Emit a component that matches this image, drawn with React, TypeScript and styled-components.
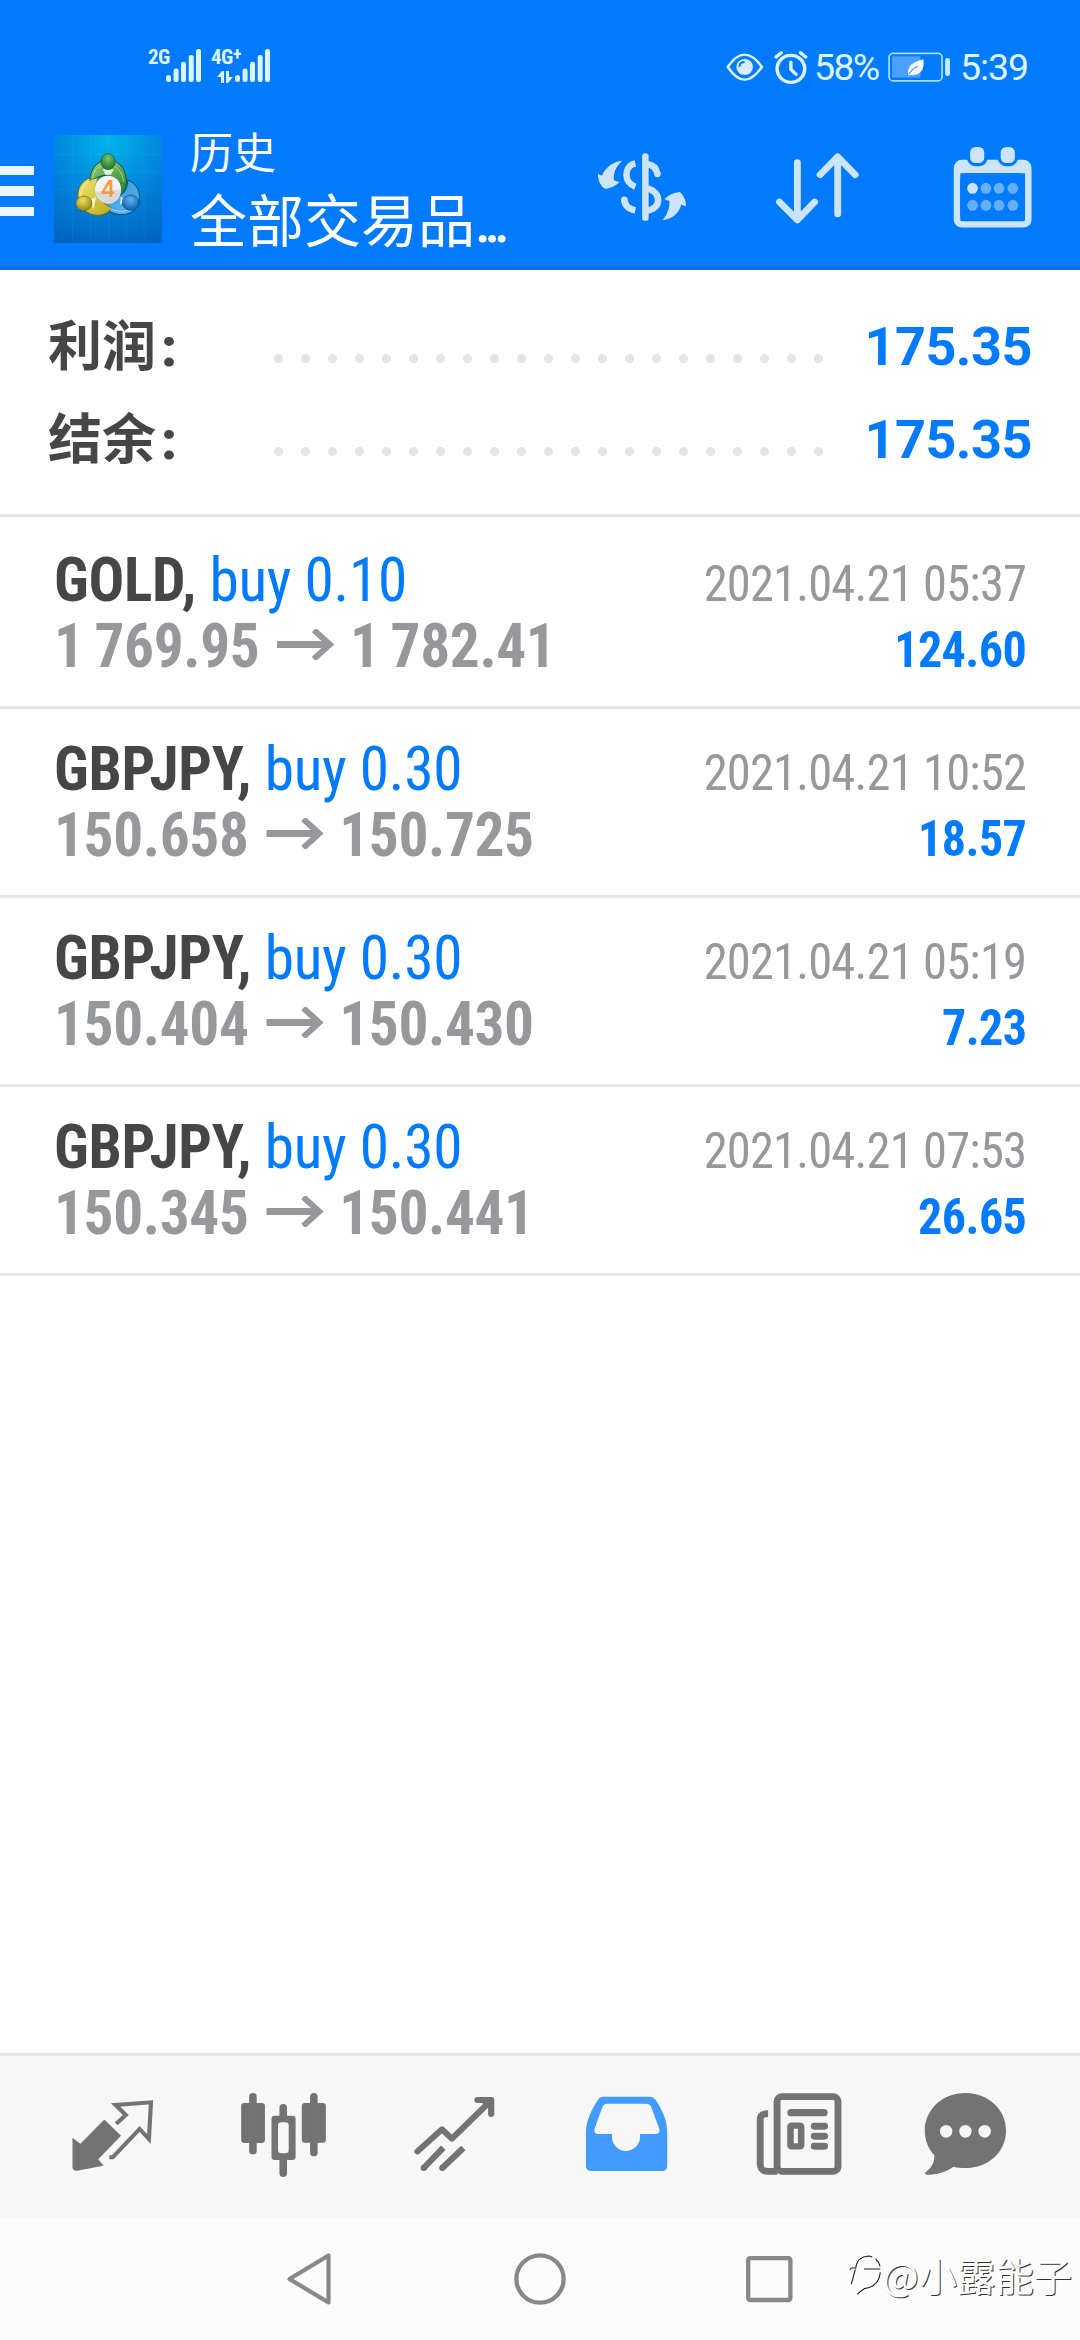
import React from 'react';
import styled, { createGlobalStyle } from 'styled-components';

const GlobalStyle = createGlobalStyle`
  * { box-sizing: border-box; }
  html, body { margin: 0; padding: 0; background: #fff; }
  body { font-family: Roboto, "Noto Sans CJK SC", sans-serif; }
  svg { display: block; flex: none; }
`;

const BLUE = '#007aff';
const GREY = '#737373';

const Screen = styled.div`
  width: 1080px;
  height: 2340px;
  display: flex;
  flex-direction: column;
  background: #fff;
  overflow: hidden;
  position: relative;
`;

const Header = styled.header`
  height: 270px;
  background: ${BLUE};
  border-bottom: 3px solid #0a6ede;
`;

const StatusBar = styled.div`
  height: 111px;
  padding: 48px 53px 0 148px;
  display: flex;
  justify-content: space-between;
  align-items: flex-start;
  color: #dcf4ff;
`;

const SignalGroup = styled.div`
  display: flex;
  gap: 10px;
`;

const Signal = styled.div`
  display: flex;
  align-items: flex-start;
  height: 35px;
`;

const NetLabel = styled.span<{ $w: number }>`
  width: ${(p) => p.$w}px;
  height: 34px;
  font: 700 21px/18px Roboto, sans-serif;
  font-stretch: 75%;
  letter-spacing: -0.5px;
  white-space: nowrap;
`;

const Sup = styled.span`
  font-size: 18px;
  position: relative;
  top: -4px;
`;

const DataArrows = styled.svg`
  margin-top: 4px;
  margin-left: 6px;
`;

const StatusRight = styled.div`
  display: flex;
  align-items: center;
  height: 38px;
`;

const AlarmSlot = styled.div`
  margin-left: 10px;
`;

const StatusText = styled.span<{ $w: number; $ml: number; $ls: number }>`
  width: ${(p) => p.$w}px;
  margin-left: ${(p) => p.$ml}px;
  font: 400 37.5px/38px Roboto, sans-serif;
  letter-spacing: ${(p) => p.$ls}px;
  white-space: nowrap;
`;

const ActionBar = styled.div`
  height: 156px;
  display: flex;
  align-items: center;
  padding-right: 42px;
`;

const Menu = styled.div`
  width: 54px;
  display: flex;
  flex-direction: column;
  gap: 11px;
  padding-top: 4px;
`;

const MenuLine = styled.i`
  width: 34px;
  height: 9.5px;
  background: #ebf7ff;
`;

const Titles = styled.div`
  flex: 1;
  height: 156px;
  padding: 9px 0 0 28px;
  color: #fff;
  display: flex;
  flex-direction: column;
`;

const Title = styled.span`
  font: 400 43px/60px "Noto Sans CJK SC", sans-serif;
  height: 57px;
`;

const Subtitle = styled.span`
  font: 400 57px/80px "Noto Sans CJK SC", sans-serif;
  height: 80px;
  white-space: nowrap;
`;

const Ellipsis = styled.span`
  font-family: Roboto, sans-serif;
  font-weight: 500;
  letter-spacing: -6.3px;
`;

const Actions = styled.div`
  display: flex;
  gap: 85.5px;
`;

const Summary = styled.section`
  height: 247px;
  padding: 30px 48px 0;
  border-bottom: 3px solid #e5e5e5;
`;

const SummaryRow = styled.div`
  height: 93px;
  display: flex;
  align-items: center;
`;

const SummaryLabel = styled.span`
  width: 226px;
  height: 93px;
  color: #464646;
  font: 700 54px/85px "Noto Sans CJK SC", sans-serif;
`;

const Colon = styled.span`
  font-family: Roboto, sans-serif;
  font-weight: 900;
  margin-left: 5px;
`;

const Dots = styled.div`
  width: 567px;
  height: 9px;
  margin-top: 23px;
  background: radial-gradient(circle at 4.5px 4.5px, #e5e5e5 4.2px, transparent 4.8px) 0 0 / 27px 9px repeat-x;
`;

const SummaryValue = styled.span`
  flex: 1;
  text-align: right;
  color: ${BLUE};
  font: 700 54px/93px Roboto, sans-serif;
  letter-spacing: -0.5px;
`;

const Deals = styled.main`
  flex: 1;
  padding-top: 3px;
`;

const Deal = styled.article`
  height: 189px;
  border-bottom: 3px solid #e5e5e5;
  padding: 27px 54px 0;
  font-stretch: 75%;
`;

const Line = styled.div`
  height: 66px;
  display: flex;
  justify-content: space-between;
  align-items: baseline;
  line-height: 66px;
  white-space: nowrap;
`;

const Symbol = styled.span`
  font-size: 61.5px;
  font-weight: 700;
  color: #464646;
  letter-spacing: -0.3px;
  transform: scaleX(0.965);
  transform-origin: left;
`;

const Side = styled.span`
  font-weight: 400;
  color: ${BLUE};
`;

const Prices = styled.span`
  font-size: 61.5px;
  font-weight: 700;
  color: #97989c;
  letter-spacing: -0.4px;
  word-spacing: -2.5px;
  transform: scaleX(0.965);
  transform-origin: left;
`;

const PriceArrow = styled.svg`
  && { display: inline-block; }
  margin: 0 16px 0 18px;
  vertical-align: 7px;
`;

const Time = styled.span`
  font-size: 50.3px;
  color: #97989c;
  letter-spacing: -0.85px;
  transform: scaleX(0.965);
  transform-origin: right;
`;

const Profit = styled.span`
  font-size: 50.3px;
  font-weight: 700;
  color: ${BLUE};
  letter-spacing: -0.6px;
  transform: scaleX(0.955);
  transform-origin: right;
`;

const TabBar = styled.nav`
  height: 165px;
  border-top: 3px solid #e4e4e4;
  background: #f7f7f7;
  padding: 36px 27px 0;
  display: flex;
`;

const Tab = styled.div`
  width: 171px;
  display: flex;
  justify-content: center;
`;

const SystemNav = styled.nav`
  height: 122px;
  background: #fcfcfc;
  padding: 35px 0 0 287px;
  display: flex;
  align-items: flex-start;
`;

const NavSlot = styled.div<{ $w: number }>`
  width: ${(p) => p.$w}px;
`;

const Watermark = styled.div`
  position: absolute;
  right: 8px;
  bottom: 35px;
  height: 60px;
  display: flex;
  align-items: center;
  color: #fff;
  font: 400 38.3px/60px "Noto Sans CJK SC", sans-serif;
  text-shadow: 1px 1px 0 #333;
`;

const CropIcon = ({ box, w = 90, h = 90, children }: { box: string; w?: number; h?: number; children: React.ReactNode }) => (
  <svg width={w} height={h} viewBox={box} preserveAspectRatio="none">{children}</svg>
);

const Bars = () => (
  <svg width="35" height="34" viewBox="0 0 35 34" fill="#dcf4ff">
    <rect x="0" y="27" width="5" height="7" rx="2.5" />
    <rect x="7.6" y="20.5" width="5" height="13.5" rx="2.2" />
    <rect x="15" y="13.7" width="5" height="20.3" rx="2.2" />
    <rect x="22.7" y="7" width="5" height="27" rx="2.2" />
    <rect x="30" y="1" width="5" height="33" rx="2.2" />
  </svg>
);

const EyeIcon = () => (
  <CropIcon box="538 64 110 90" w={38} h={30}>
    <path d="M543 109C562 80 578 72 592 72S622 80 642 109C622 138 606 147 592 147S562 138 543 109Z" fill="none" stroke="#dcf4ff" strokeWidth="7" />
    <circle cx="592" cy="109" r="24" fill="#dcecff" />
    <path d="M577 108C577 98 584 94 592 94" fill="none" stroke={BLUE} strokeWidth="6" />
  </CropIcon>
);

const AlarmIcon = () => (
  <CropIcon box="678 56 100 106" w={34.5} h={35}>
    <ellipse cx="727" cy="113" rx="40" ry="41" fill="none" stroke="#dcf4ff" strokeWidth="10" />
    <path d="M727 93V115L742 130" fill="none" stroke="#dcf4ff" strokeWidth="10" strokeLinecap="round" />
    <path d="M684 77L699 64M770 77L755 64" fill="none" stroke="#dcf4ff" strokeWidth="10" strokeLinecap="round" />
  </CropIcon>
);

const BatteryIcon = () => (
  <CropIcon box="1010 64 183 92" w={63} h={30.6}>
    <rect x="1013" y="68" width="154" height="83" rx="12" fill="none" stroke="#a6dcff" strokeWidth="5" />
    <rect x="1022" y="77" width="82" height="64" fill="#4da0ff" />
    <rect x="1176" y="82" width="14" height="54" rx="6" fill="#c7ebff" />
    <path d="M1113 86C1116 118 1106 135 1074 133L1069 134C1066 104 1080 96 1113 86Z" fill="#fff" />
    <path d="M1070 131C1078 118 1086 112 1097 106" fill="none" stroke="#4da0ff" strokeWidth="3" />
  </CropIcon>
);

const LogoIcon = () => (
  <svg width="108" height="108" viewBox="42 45 324 324">
    <defs>
      <radialGradient id="sky" cx="0.5" cy="0.05" r="1">
        <stop offset="0" stopColor="#00b4ea" />
        <stop offset="0.5" stopColor="#0086dc" />
        <stop offset="1" stopColor="#0065c0" />
      </radialGradient>
      <linearGradient id="green" x1="0" y1="0" x2="0.6" y2="1">
        <stop offset="0" stopColor="#9ccf7a" />
        <stop offset="1" stopColor="#2f8a34" />
      </linearGradient>
      <linearGradient id="yellow" x1="0" y1="0" x2="1" y2="1">
        <stop offset="0" stopColor="#f1ea74" />
        <stop offset="1" stopColor="#bba91c" />
      </linearGradient>
      <linearGradient id="azure" x1="0" y1="0" x2="0.6" y2="1">
        <stop offset="0" stopColor="#2d93d8" />
        <stop offset="1" stopColor="#57b4ea" />
      </linearGradient>
      <radialGradient id="gHead" cx="0.5" cy="0.3" r="0.7"><stop offset="0" stopColor="#7cc46a" /><stop offset="1" stopColor="#1d7427" /></radialGradient>
      <radialGradient id="yHead" cx="0.4" cy="0.3" r="0.7"><stop offset="0" stopColor="#e9de62" /><stop offset="1" stopColor="#9a8a10" /></radialGradient>
      <radialGradient id="bHead" cx="0.5" cy="0.3" r="0.7"><stop offset="0" stopColor="#5cb5ee" /><stop offset="1" stopColor="#0c5ea8" /></radialGradient>
    </defs>
    <rect x="42" y="45" width="324" height="324" fill="url(#sky)" />
    <path d="M97 45V369M152 45V369M207 45V369M260 45V369M312 45V369M42 103H366M42 156H366M42 210H366M42 264H366M42 316H366" stroke="#7fd4ff" strokeOpacity="0.13" strokeWidth="2" />
    <g strokeLinejoin="round">
      <path d="M262 180C292 190 302 216 297 246C290 274 262 288 232 283C205 277 188 262 180 244L232 230C256 222 264 202 262 180Z" fill="url(#azure)" stroke="#0b4d86" strokeWidth="3" />
      <path d="M176 168C136 170 110 196 114 232C118 266 144 286 176 286C196 284 208 276 214 264L176 238L166 200Z" fill="url(#yellow)" stroke="#6f6a10" strokeWidth="3" />
      <path d="M150 184C148 146 174 120 204 120C242 120 262 156 259 190C256 210 246 222 234 226L242 190L204 164L176 170Z" fill="url(#green)" stroke="#1c5a25" strokeWidth="3" />
      <path d="M158 174C162 146 180 134 204 134C232 136 250 160 250 186" fill="none" stroke="#c5e8ae" strokeOpacity="0.7" strokeWidth="3" />
      <path d="M122 236C120 204 140 182 168 178" fill="none" stroke="#fffcc0" strokeOpacity="0.8" strokeWidth="3" />
      <path d="M206 262C232 282 282 278 290 240" fill="none" stroke="#b7e2ff" strokeOpacity="0.8" strokeWidth="3" />
      <path d="M150 240L168 230L160 268Z" fill="#fff8d0" />
      <path d="M242 230L258 240L240 254Z" fill="#d8efff" />
      <path d="M188 148H222L212 164H196Z" fill="#e4f6da" />
      <ellipse cx="204" cy="125" rx="21" ry="24" fill="url(#gHead)" stroke="#1c5a25" strokeWidth="2" />
      <ellipse cx="132" cy="250" rx="24" ry="22" fill="url(#yHead)" stroke="#6f6a10" strokeWidth="2" />
      <ellipse cx="272" cy="248" rx="25" ry="23" fill="url(#bHead)" stroke="#0b4d86" strokeWidth="2" />
    </g>
    <circle cx="204" cy="206" r="39" fill="#f4f2f2" />
    <path d="M165 214C185 216 205 208 243 210A39 39 0 0 1 165 214Z" fill="#dcdad9" />
    <text x="204" y="230" textAnchor="middle" fontFamily="Inter, sans-serif" fontWeight="600" fontSize="68" fill="#f39a45">4</text>
  </svg>
);

const CurrencyIcon = () => (
  <CropIcon box="165.5 342 261.4 270">
    <g fill="none" stroke="#cce4ff" strokeWidth="19">
      <path d="M306 379V563" strokeLinecap="round" />
      <path d="M277 400C258 404 251 420 251 435S260 464 277 470" />
      <path d="M245 510C246 526 258 537 277 541" />
      <path d="M245 510V509" strokeLinecap="round" />
      <path d="M310 402C328 404 338 415 341 432" />
      <path d="M341 431V432" strokeLinecap="round" />
      <path d="M310 474C334 482 343 496 343 510S334 537 312 542" />
    </g>
    <path d="M236 393C222 392 190 408 180 437L168 431C168 450 175 467 190 477C204 475 220 468 231 457L215 451C212 430 219 412 238 394Z" fill="#cce4ff" />
    <path d="M356 571C372 550 377 530 376 513L361 508C372 495 388 488 406 486C418 497 424 510 424 529L410 524C404 550 384 566 356 571Z" fill="#cce4ff" />
  </CropIcon>
);

const SortIcon = () => (
  <CropIcon box="675.2 342 261.4 270">
    <g fill="none" stroke="#cce4ff" strokeWidth="20" strokeLinecap="round" strokeLinejoin="round">
      <path d="M746 398V566M694 516L746 570L796 516" />
      <path d="M863 552V384M812 434L863 380L914 434" />
    </g>
  </CropIcon>
);

const CalendarIcon = () => (
  <CropIcon box="1184.8 342 261.4 270">
    <rect x="1211" y="399" width="207" height="184" rx="14" fill="none" stroke="#cce4ff" strokeWidth="19" />
    <path d="M1215 395H1414V430H1215Z" fill="#cce4ff" />
    <rect x="1220" y="429" width="188" height="143" rx="20" fill={BLUE} />
    <rect x="1240" y="342" width="60" height="67" rx="26" fill={BLUE} />
    <rect x="1329" y="342" width="59" height="67" rx="26" fill={BLUE} />
    <rect x="1249" y="351" width="41" height="48" rx="16" fill="#cce4ff" />
    <rect x="1338" y="351" width="41" height="48" rx="16" fill="#cce4ff" />
    {[475, 526].map((y) =>
      [1256, 1295, 1333, 1373].map((x, i) => (
        <ellipse key={`${x}-${y}`} cx={x} cy={y} rx="15.5" ry="16.5" fill={i === 0 && y === 475 ? '#cce4ff' : '#66afff'} />
      ))
    )}
  </CropIcon>
);

const QuotesIcon = () => (
  <CropIcon box="196 156 261.4 270">
    <path d="M303 240L350 287L284 358L299 377L222 392Q209 393 209 380V293L232 311L298 242Q303 238 308 243Z" fill={GREY} />
    <path d="M336 251L364 225L334 195L437 187L431 297L404 267L326 352H316" fill="none" stroke={GREY} strokeWidth="12" />
  </CropIcon>
);

const ChartIcon = () => (
  <CropIcon box="692.6 156 261.4 270">
    <g fill={GREY}>
      <rect x="699" y="189" width="69" height="120" rx="9" />
      <rect x="722" y="159" width="22" height="184" rx="11" />
      <rect x="875" y="189" width="70" height="119" rx="9" />
      <rect x="899" y="159" width="22" height="190" rx="11" />
      <rect x="810" y="192" width="22" height="219" rx="11" />
      <rect x="787" y="227" width="70" height="133" rx="9" />
    </g>
    <rect x="806" y="247" width="31" height="93" rx="10" fill="#f7f7f7" />
  </CropIcon>
);

const TradeIcon = () => (
  <CropIcon box="1189.2 156 261.4 270">
    <g fill="none" stroke={GREY} strokeWidth="18">
      <path d="M1211 334L1282 268L1311 296L1422 184" strokeLinecap="round" strokeLinejoin="round" />
      <path d="M1385 180H1425V222" strokeLinecap="round" strokeLinejoin="round" />
      <path d="M1229 384L1286 323M1283 384L1344 324" />
      <path d="M1229 384H1229.1M1283 384H1283.1" strokeLinecap="round" />
    </g>
    <path d="M1395 185H1425V212Z" fill={GREY} />
  </CropIcon>
);

const HistoryIcon = () => (
  <CropIcon box="117.6 156 261.4 270">
    <path fillRule="evenodd" fill="#429bff" d="M182 170H318Q328 170 334 179C354 210 368 240 368 278V378Q368 393 353 393H148Q132 393 132 378V278C132 240 148 210 167 179Q172 170 182 170ZM194 191Q184 191 180 200L157 266Q154 281 168 282H208C204 312 225 333 248 333S293 312 289 282H334Q348 281 345 266L321 200Q317 191 307 191Z" />
  </CropIcon>
);

const NewsIcon = () => (
  <CropIcon box="614.2 156 261.4 270">
    <rect x="687" y="170" width="177" height="224" rx="14" fill="none" stroke={GREY} strokeWidth="20" />
    <path d="M661 221C644 221 638 226 638 238V370C638 388 644 394 662 394H688" fill="none" stroke={GREY} strokeWidth="20" />
    <g fill={GREY}>
      <rect x="717" y="207" width="117" height="22" rx="11" />
      <rect x="785" y="248" width="50" height="21" rx="10" />
      <rect x="785" y="278" width="50" height="21" rx="10" />
      <rect x="785" y="308" width="50" height="21" rx="10" />
    </g>
    <rect x="726" y="257" width="31" height="62" rx="3" fill="none" stroke={GREY} strokeWidth="19" />
  </CropIcon>
);

const ChatIcon = () => (
  <CropIcon box="1110.8 156 261.4 270">
    <path d="M1234 159C1302 159 1352 210 1352 272S1302 384 1234 384C1222 384 1210 383 1199 380C1178 396 1150 404 1122 404Q1114 402 1119 396C1136 384 1144 368 1144 346C1126 326 1116 300 1116 272C1116 210 1166 159 1234 159Z" fill={GREY} />
    <ellipse cx="1178" cy="274" rx="18" ry="19" fill="#f7f7f7" />
    <ellipse cx="1234" cy="274" rx="18" ry="19" fill="#f7f7f7" />
    <ellipse cx="1290" cy="274" rx="18" ry="19" fill="#f7f7f7" />
  </CropIcon>
);

const WatermarkLogo = () => (
  <svg width="38" height="44" viewBox="40 94 114 132">
    <path d="M58 186L70 140C74 112 92 102 108 103C136 104 150 124 146 150C142 178 128 196 96 201L78 217" fill="none" stroke="#fff" strokeWidth="12" />
    <g fill="none" stroke="#222" strokeWidth="3.4">
      <path d="M72 138C76 114 92 104 110 103C118 103 122 106 120 108" />
      <path d="M55 144Q56 139 62 139H74M97 142H146" />
      <path d="M71 143L59 187" />
      <path d="M132 112Q142 120 145 134M146 152C143 178 128 197 98 201Q86 208 77 218" />
    </g>
  </svg>
);

const deals = [
  { symbol: 'GOLD', side: 'buy 0.10', from: '1 769.95', to: '1 782.41', time: '2021.04.21 05:37', profit: '124.60' },
  { symbol: 'GBPJPY', side: 'buy 0.30', from: '150.658', to: '150.725', time: '2021.04.21 10:52', profit: '18.57' },
  { symbol: 'GBPJPY', side: 'buy 0.30', from: '150.404', to: '150.430', time: '2021.04.21 05:19', profit: '7.23' },
  { symbol: 'GBPJPY', side: 'buy 0.30', from: '150.345', to: '150.441', time: '2021.04.21 07:53', profit: '26.65' },
];

const totals = [
  { label: '利润', value: '175.35' },
  { label: '结余', value: '175.35' },
];

const tabs = [QuotesIcon, ChartIcon, TradeIcon, HistoryIcon, NewsIcon, ChatIcon];

export default function App() {
  return (
    <Screen>
      <GlobalStyle />
      <Header>
        <StatusBar>
          <SignalGroup>
            <Signal>
              <NetLabel $w={18}>2G</NetLabel>
              <Bars />
            </Signal>
            <Signal>
              <NetLabel $w={24}>
                4G<Sup>+</Sup>
                <DataArrows width="16" height="12" viewBox="0 0 16 12" fill="#dcf4ff">
                  <path d="M0 6L5 0H7V12H4V6ZM9 0H12V6H16L11 12H9Z" />
                </DataArrows>
              </NetLabel>
              <Bars />
            </Signal>
          </SignalGroup>
          <StatusRight>
            <EyeIcon />
            <AlarmSlot><AlarmIcon /></AlarmSlot>
            <StatusText $w={74} $ml={6} $ls={-1.7}>58%</StatusText>
            <BatteryIcon />
            <StatusText $w={67} $ml={9} $ls={-1.1}>5:39</StatusText>
          </StatusRight>
        </StatusBar>
        <ActionBar>
          <Menu>
            <MenuLine />
            <MenuLine />
            <MenuLine />
          </Menu>
          <LogoIcon />
          <Titles>
            <Title>历史</Title>
            <Subtitle>全部交易品<Ellipsis>...</Ellipsis></Subtitle>
          </Titles>
          <Actions>
            <CurrencyIcon />
            <SortIcon />
            <CalendarIcon />
          </Actions>
        </ActionBar>
      </Header>
      <Summary>
        {totals.map((t) => (
          <SummaryRow key={t.label}>
            <SummaryLabel>{t.label}<Colon>:</Colon></SummaryLabel>
            <Dots />
            <SummaryValue>{t.value}</SummaryValue>
          </SummaryRow>
        ))}
      </Summary>
      <Deals>
        {deals.map((d) => (
          <Deal key={d.time}>
            <Line>
              <Symbol>{d.symbol}, <Side>{d.side}</Side></Symbol>
              <Time>{d.time}</Time>
            </Line>
            <Line>
              <Prices>
                {d.from}
                <PriceArrow width="60" height="31" viewBox="0 0 58 31" preserveAspectRatio="none" fill="none" stroke="#97989c" strokeWidth="7">
                  <path d="M0 15.5H52" />
                  <path d="M37 1L53 15.5L37 30" strokeWidth="6" />
                </PriceArrow>
                {d.to}
              </Prices>
              <Profit>{d.profit}</Profit>
            </Line>
          </Deal>
        ))}
      </Deals>
      <TabBar>
        {tabs.map((Icon, i) => (
          <Tab key={i}><Icon /></Tab>
        ))}
      </TabBar>
      <SystemNav>
        <NavSlot $w={227}>
          <svg width="45" height="52" viewBox="0 0 45 52" fill="none" stroke="#888" strokeWidth="4.2" strokeLinejoin="round">
            <path d="M41.5 2.5V49.5L2.5 26Z" />
          </svg>
        </NavSlot>
        <NavSlot $w={231}>
          <svg width="52" height="52" viewBox="0 0 52 52" fill="none" stroke="#888" strokeWidth="4.3">
            <circle cx="26" cy="26" r="23.6" />
          </svg>
        </NavSlot>
        <NavSlot $w={60}>
          <svg width="50" height="52" viewBox="0 0 50 52" fill="none" stroke="#888" strokeWidth="4.3">
            <rect x="3.2" y="5.2" width="42.2" height="41.8" rx="2" />
          </svg>
        </NavSlot>
      </SystemNav>
      <Watermark>
        <WatermarkLogo />
        @小露能子
      </Watermark>
    </Screen>
  );
}
